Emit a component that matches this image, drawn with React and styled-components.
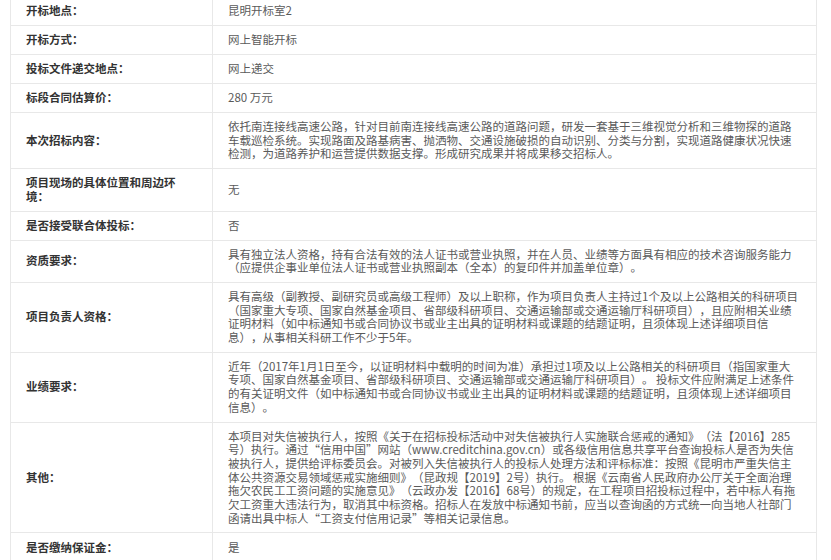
import React from "react";
import styled, { createGlobalStyle } from "styled-components";

const Global = createGlobalStyle`
  html, body { margin: 0; padding: 0; background: #fff; }
  body { font-family: "Noto Sans CJK SC", "Noto Sans", sans-serif; }
`;

const Wrap = styled.div`
  padding: 0 0 0 10px;
  margin-top: -4px;
`;

const Table = styled.table`
  width: 807px;
  border-collapse: collapse;
  table-layout: fixed;
  font-size: 11.5px;
  line-height: 13.7px;
  text-spacing-trim: space-all;
`;

const Row = styled.tr``;

const Label = styled.th`
  width: 202px;
  box-sizing: border-box;
  height: 14px;
  padding: 7px 32px 7px 15px;
  border: 1px solid #e8e8e8;
  text-align: left;
  vertical-align: middle;
  font-weight: 700;
  color: #333;
`;

const Value = styled.td`
  height: 14px;
  padding: 7px 16px 7px 15px;
  border: 1px solid #e8e8e8;
  vertical-align: middle;
  color: #5a5a5a;
  word-break: break-all;
`;

const rows = [
  ["开标地点：", "昆明开标室2"],
  ["开标方式：", "网上智能开标"],
  ["投标文件递交地点：", "网上递交"],
  ["标段合同估算价：", "280 万元"],
  [
    "本次招标内容：",
    "依托南连接线高速公路，针对目前南连接线高速公路的道路问题，研发一套基于三维视觉分析和三维物探的道路车载巡检系统。实现路面及路基病害、抛洒物、交通设施破损的自动识别、分类与分割，实现道路健康状况快速检测，为道路养护和运营提供数据支撑。形成研究成果并将成果移交招标人。",
  ],
  ["项目现场的具体位置和周边环境：", "无"],
  ["是否接受联合体投标：", "否"],
  [
    "资质要求：",
    "具有独立法人资格，持有合法有效的法人证书或营业执照，并在人员、业绩等方面具有相应的技术咨询服务能力（应提供企事业单位法人证书或营业执照副本（全本）的复印件并加盖单位章）。",
  ],
  [
    "项目负责人资格：",
    "具有高级（副教授、副研究员或高级工程师）及以上职称，作为项目负责人主持过1个及以上公路相关的科研项目（国家重大专项、国家自然基金项目、省部级科研项目、交通运输部或交通运输厅科研项目），且应附相关业绩证明材料（如中标通知书或合同协议书或业主出具的证明材料或课题的结题证明，且须体现上述详细项目信息），从事相关科研工作不少于5年。",
  ],
  [
    "业绩要求：",
    "近年（2017年1月1日至今，以证明材料中载明的时间为准）承担过1项及以上公路相关的科研项目（指国家重大专项、国家自然基金项目、省部级科研项目、交通运输部或交通运输厅科研项目）。 投标文件应附满足上述条件的有关证明文件（如中标通知书或合同协议书或业主出具的证明材料或课题的结题证明，且须体现上述详细项目信息）。",
  ],
  [
    "其他：",
    "本项目对失信被执行人，按照《关于在招标投标活动中对失信被执行人实施联合惩戒的通知》（法【2016】285号）执行。通过“信用中国”网站（www.creditchina.gov.cn）或各级信用信息共享平台查询投标人是否为失信被执行人，提供给评标委员会。对被列入失信被执行人的投标人处理方法和评标标准：按照《昆明市严重失信主体公共资源交易领域惩戒实施细则》（昆政规【2019】2号）执行。 根据《云南省人民政府办公厅关于全面治理拖欠农民工工资问题的实施意见》（云政办发【2016】68号）的规定，在工程项目招投标过程中，若中标人有拖欠工资重大违法行为，取消其中标资格。招标人在发放中标通知书前，应当以查询函的方式统一向当地人社部门函请出具中标人“工资支付信用记录”等相关记录信息。",
  ],
  ["是否缴纳保证金：", "是"],
];

export default function App() {
  return (
    <>
      <Global />
      <Wrap>
        <Table>
          <tbody>
            {rows.map(([k, v]) => (
              <Row key={k}>
                <Label>{k}</Label>
                <Value>{v}</Value>
              </Row>
            ))}
          </tbody>
        </Table>
      </Wrap>
    </>
  );
}
